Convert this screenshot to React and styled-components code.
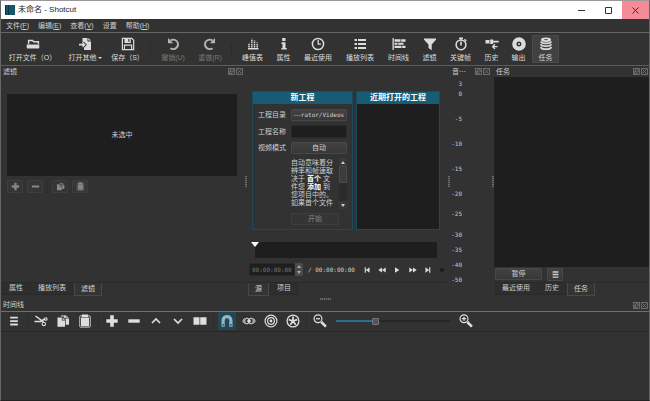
import React, { useState } from "react";
import styled, { createGlobalStyle, css } from "styled-components";

const GlobalStyle = createGlobalStyle`
  * {
    box-sizing: border-box;
  }

  body {
    margin: 0;
    background: #323232;
  }

  body, button, input {
    color: #cfcfcf;
    font-family: "Liberation Sans", "Noto Sans CJK SC", sans-serif;
    font-size: 7px;
    line-height: 8px;
  }

  button {
    margin: 0;
    padding: 0;
  }
`;

const Window = styled.div`
  display: flex;
  flex-direction: column;
  min-height: 100vh;
  border: 1px solid #666;
  border-top-color: #999;
  border-bottom-color: #222;
  background: #323232;
`;

/* title bar */

const TitleBar = styled.header`
  display: flex;
  align-items: center;
  height: 18px;
  padding-left: 4px;
  gap: 3px;
  background: #fff;
`;

const WindowTitle = styled.h1`
  flex: 1;
  margin: 0;
  color: #222;
  font-size: 8px;
  font-weight: normal;
  line-height: 10px;
`;

const WindowButtons = styled.div`
  display: flex;
  height: 100%;
`;

const WindowButton = styled.button`
  display: flex;
  align-items: center;
  justify-content: center;
  width: 27px;
  border: 0;
  background: ${(props) => (props.$close ? "#f48c98" : "#fff")};
  color: #333;
`;

/* menu and main toolbar */

const MenuBar = styled.nav`
  display: flex;
  align-items: center;
  height: 14px;
  padding: 0 5px;
  gap: 9px;
  border-bottom: 1px solid #666;
`;

const MenuItem = styled.button`
  border: 0;
  background: none;
`;

const Toolbar = styled.div`
  display: flex;
  align-items: center;
  height: 33px;
  padding: 0 2px;
  border-bottom: 1px solid #5c5c5c;
`;

const ToolButton = styled.button`
  display: flex;
  flex-direction: column;
  align-items: center;
  justify-content: space-between;
  flex: none;
  width: ${(props) => props.$width}px;
  height: 28px;
  padding: 1px 0 0;
  border: 1px solid ${(props) => (props.$active ? "#4a4a4a" : "transparent")};
  border-radius: 1px;
  background: ${(props) => (props.$active ? "#414141" : "none")};
  color: #dcdcdc;
  white-space: nowrap;

  &:disabled {
    color: #777;
  }

  &:disabled svg {
    color: #b4b4b4;
  }
`;

const Separator = styled.span`
  flex: none;
  width: 1px;
  height: 12px;
  margin: 0 ${(props) => props.$space || 0}px;
  background: #2b2b2b;
`;

/* docks */

const DockArea = styled.main`
  display: grid;
  flex: 231 1 0;
  grid-template-columns:
    minmax(0, 243fr) 3px minmax(200px, 200fr) 3px
    41px 3px minmax(0, 155fr);
`;

const Dock = styled.section`
  display: flex;
  flex-direction: column;
  min-width: 0;
`;

const DockTitle = styled.div`
  display: flex;
  align-items: center;
  gap: 1px;
  height: 11px;
  padding: 0 1px 0 2px;
`;

const DockName = styled.h2`
  flex: 1;
  margin: 0;
  font-size: 7px;
  font-weight: normal;
  line-height: 8px;
`;

const DockButton = styled.button`
  display: flex;
  border: 0;
  background: none;
  color: #7c7c7c;
`;

const Splitter = styled.div`
  display: flex;
  align-items: center;
  justify-content: center;

  &::after {
    content: "";
    width: ${(props) => (props.$horizontal ? 11 : 2)}px;
    height: ${(props) => (props.$horizontal ? 2 : 11)}px;
    background: repeating-linear-gradient(
      ${(props) => (props.$horizontal ? "90deg" : "180deg")},
      #6c6c6c 0 1px,
      #444 1px 2px
    );
  }
`;

const Tabs = styled.div`
  display: flex;
  align-items: flex-start;
  gap: 1px;
  height: 16px;
  padding: 0 1px;
  border-top: 1px solid #292929;
`;

const Tab = styled.button`
  height: 12px;
  padding: 0 6px;
  border: 1px solid #292929;
  border-top: 0;
  background: #2e2e2e;

  ${(props) =>
    props.$active &&
    css`
      height: 13px;
      border-color: #484848;
      background: #343434;
    `}
`;

const PushButton = styled.button`
  display: flex;
  align-items: center;
  justify-content: center;
  width: ${(props) => props.$width || "100%"};
  height: ${(props) => (props.$tall ? 13 : 12)}px;
  border: 1px solid #484848;
  border-radius: 1px;
  background: linear-gradient(#424242, #383838);

  &:disabled {
    border-color: #3e3e3e;
    background: #353535;
    color: #858585;
  }
`;

/* filters */

const FilterBody = styled.div`
  display: flex;
  flex: 1;
  flex-direction: column;
  padding: 17px 7px 0 6px;
`;

const FilterList = styled.div`
  display: flex;
  align-items: center;
  justify-content: center;
  height: 82px;
  background: #1e1e1e;
`;

const FilterActions = styled.div`
  display: flex;
  align-items: center;
  gap: 4px;
  padding-top: 4px;
`;

/* player and project panels */

const PlayerBody = styled.div`
  display: flex;
  flex: 1;
  flex-direction: column;
  padding: 25px 7px 0 5px;
`;

const Projects = styled.div`
  display: grid;
  grid-template-columns: 101fr 84fr;
  gap: 3px;
  height: 139px;
`;

const Panel = styled.section`
  display: flex;
  flex-direction: column;
  min-width: 0;
  border: 1px solid #1b4b5b;
`;

const PanelTitle = styled.h3`
  margin: 0;
  background: #175c75;
  color: #fff;
  font-size: 8px;
  line-height: 12px;
  text-align: center;
`;

const RecentList = styled.div`
  flex: 1;
  background: #1e1e1e;
`;

const ProjectForm = styled.form`
  display: grid;
  grid-template-columns: 28px 1fr;
  align-items: center;
  column-gap: 5px;
  row-gap: 4px;
  padding: 5px 5px 0;
  white-space: nowrap;
`;

const NameInput = styled.input`
  width: 100%;
  height: 13px;
  padding: 0 2px;
  border: 1px solid #292929;
  border-radius: 1px;
  background: #1e1e1e;
`;

const Mono = styled.span`
  font-family: "DejaVu Sans Mono", monospace;
  font-size: 6px;
`;

const Ellipsis = styled.span`
  font-family: "Noto Sans CJK SC", sans-serif;
`;

const Hint = styled.div`
  display: flex;
  grid-column: 2;
  justify-content: space-between;
  height: 51px;
`;

const HintText = styled.p`
  width: 46px;
  margin: 0;
  padding-top: 1px;

  b {
    color: #fff;
  }
`;

const ScrollBar = styled.div`
  display: flex;
  flex-direction: column;
  width: 8px;
  background: #2b2b2b;
`;

const ScrollThumb = styled.div`
  height: 17px;
  margin-bottom: auto;
  border: 1px solid #4a4a4a;
  background: #3c3c3c;
`;

const ScrollButton = styled.button`
  display: flex;
  align-items: center;
  justify-content: center;
  height: 8px;
  border: 0;
  background: #383838;
`;

const StartRow = styled.div`
  grid-column: 2;
`;

const ScrubBar = styled.div`
  position: relative;
  height: 16px;
  margin: 12px 3px 0;
  background: #1e1e1e;
`;

const Playhead = styled.svg`
  position: absolute;
  top: 0;
  left: -4px;
`;

const Transport = styled.div`
  display: flex;
  align-items: center;
  height: 13px;
  margin: 5px -7px 0 -3px;
  white-space: nowrap;
`;

const TimeInput = styled.input`
  width: 46px;
  height: 13px;
  padding: 0 2px;
  border: 1px solid #292929;
  border-radius: 2px 0 0 2px;
  background: #1e1e1e;
  color: #777;
  font-family: "DejaVu Sans Mono", monospace;
  font-size: 6px;
`;

const SpinButton = styled.button`
  display: flex;
  margin-right: 5px;
  border: 0;
  border-radius: 0 2px 2px 0;
  background: #4a4a4a;
`;

const TransportButtons = styled.div`
  display: flex;
  flex: 1;
  align-items: center;
  justify-content: space-between;
  max-width: 82px;
  margin-left: 8px;
`;

const IconButton = styled.button`
  display: flex;
  border: 0;
  background: none;
  color: ${(props) => (props.$dark ? "#111" : "#dcdcdc")};
`;

/* peak meter */

const MeterScale = styled.ol`
  display: flex;
  flex: 1;
  flex-direction: column;
  margin: 0;
  padding: 3px 29px 14px 0;
  list-style: none;
`;

const MeterMark = styled.li`
  flex: ${(props) => props.$span} 0 0;
  color: #c4ccd4;
  font-family: "DejaVu Sans Mono", monospace;
  font-size: 6px;
  text-align: right;
`;

/* jobs */

const JobList = styled.div`
  flex: 1;
  background: #1e1e1e;
`;

const JobActions = styled.div`
  display: flex;
  align-items: center;
  gap: 5px;
  height: 15px;
  padding: 0 1px;
`;

/* timeline */

const TimelineDock = styled.section`
  flex: 100 1 0;
`;

const TimelineTools = styled.div`
  display: flex;
  align-items: center;
  gap: 4px;
  height: 21px;
  padding: 0 4px;
  border-top: 1px solid #707070;
  border-bottom: 1px solid #272727;
`;

const TimelineButton = styled.button`
  display: flex;
  align-items: center;
  justify-content: center;
  flex: none;
  width: 18px;
  height: 18px;
  border: 0;
  border-radius: 1px;
  background: ${(props) => (props.$active ? "#224858" : "none")};
  color: ${(props) => (props.$active ? "#93b4c2" : "#dedede")};
`;

const ZoomSlider = styled.input`
  flex: none;
  width: 114px;
  height: 8px;
  margin: 0 3px;
  appearance: none;
  background: linear-gradient(90deg, #286f8b 34%, #272727 34%) center / 100% 2px
    no-repeat;

  &::-webkit-slider-thumb {
    width: 7px;
    height: 7px;
    border: 1px solid #777;
    border-radius: 1px;
    appearance: none;
    background: #555;
  }
`;

const stroke = { fill: "none", stroke: "currentColor" };

const shapes = {
  folder: (
    <>
      <path {...stroke} strokeWidth="1.4" d="M2.6 7V3.5h4l1 1.2h4.8V7" />
      <path d="M.7 7.4h12.6v3.1q0 1-1 1H1.7q-1 0-1-1z" />
    </>
  ),
  openOther: (
    <>
      <path d="M4.5 1h5v3.5H13V13H6v-2.2l3-3.1-3-2.9-1.5 1z" />
      <path d="M10.4.9 13 3.6h-2.6zM1 6.8h3.5V4.7l3.3 3-3.3 3.1V8.6H1z" />
    </>
  ),
  save: (
    <path
      fillRule="evenodd"
      d="M.8.8H11l2.3 2.3v10.2H.8zM2 2v10h.9V7.5h8.3V12h.9V3.5L10.6 2h-.8v3.9H3.5V2zm5.3 0v2.8h1.2V2zM4 8.7V12h6V8.7z"
    />
  ),
  undo: (
    <>
      <path
        {...stroke}
        strokeWidth="1.9"
        d="M4.5 3.3C8 1.6 12 3.6 12 7.3c0 4-4.5 6-7.6 4"
      />
      <path d="M2 1v5.2h5.2z" />
    </>
  ),
  redo: (
    <>
      <path
        {...stroke}
        strokeWidth="1.9"
        d="M9.5 3.3C6 1.6 2 3.6 2 7.3c0 4 4.5 6 7.6 4"
      />
      <path d="M12 1v5.2H6.8z" />
    </>
  ),
  peak: (
    <>
      <path
        {...stroke}
        strokeWidth="1.5"
        strokeDasharray="1.5 .6"
        d="M3 10.5V6M5.8 10.5V1.8M8.5 10.5V3.5M11.2 10.5V5.5"
      />
      <path d="M2 11h10.5v1.5H2z" />
    </>
  ),
  info: <path d="M5.2 1h3.3v3H5.2zM4.5 5.3h4v5.6h1.2v1.7H4.4v-1.7h1.1V7h-1z" />,
  clock: (
    <>
      <circle {...stroke} cx="7" cy="7" r="5.6" strokeWidth="1.5" />
      <path {...stroke} strokeWidth="1.3" d="M7.2 3v4.2H10" />
    </>
  ),
  list: (
    <path d="M1.5 2H4v2H1.5zM5 2h8v2H5zM1.5 6H4v2H1.5zM5 6h8v2H5zM1.5 10H4v2H1.5zM5 10h8v2H5z" />
  ),
  timeline: (
    <path d="M.5 1h1.3v12H.5zM2.5 2.2h6v2.5h-6zM9.2 2.2h4.3v2.5H9.2zM2.5 5.7h3v2h-3zM6.2 5.7h5.3v2H6.2zM2.5 8.7h7V11h-7zM10.2 8.7h3.3V11h-3.3z" />
  ),
  filter: <path d="M1 1.5h12v1.3L8.7 7.5v5.8l-3.2-2.2V7.5L1 2.8z" />,
  stopwatch: (
    <>
      <circle {...stroke} cx="7" cy="7.8" r="4.9" strokeWidth="1.5" />
      <path d="M5 .5h4v1.4H7.7v1.4H6.3V1.9H5zM6.2 4.4h1.6v4H6.2zM11 1.8l1.8 1.8-1 .8L10 2.7z" />
    </>
  ),
  history: (
    <>
      <path d="M.5 3h4v3.5h-4zM5.2 2.5h3v4.5h-3zM8.2 3.7h5.5v1.8H8.2z" />
      <path {...stroke} strokeWidth="1.3" d="M12.5 9.7H8M10 7.3 7.6 9.7 10 12" />
    </>
  ),
  disc: (
    <path
      fillRule="evenodd"
      d="M7 .2a6.8 6.8 0 1 1 0 13.6A6.8 6.8 0 0 1 7 .2M7 4.5a2.5 2.5 0 1 0 0 5 2.5 2.5 0 0 0 0-5M7 6a1 1 0 1 1 0 2 1 1 0 0 1 0-2"
    />
  ),
  jobs: (
    <>
      <ellipse cx="7" cy="2.8" rx="5" ry="2.2" />
      <ellipse cx="7" cy="2.6" rx="2" ry=".6" fill="#555" />
      <path
        {...stroke}
        strokeWidth="1.8"
        d="M1.7 4.5C2.5 7 11.5 7 12.3 4.5M1.7 7.2c.8 2.5 9.8 2.5 10.6 0M1.7 9.9c.8 3 9.8 3 10.6 0"
      />
    </>
  ),
  menu: <path d="M2.5 2h9v2.2h-9zM2.5 6h9v2.2h-9zM2.5 10h9v2.2h-9z" />,
  cut: (
    <>
      <path {...stroke} strokeWidth="1.5" d="M1.5 2 9.5 7.8M.5 7.4h6.3L11 4.6" />
      <circle {...stroke} cx="11.8" cy="5" r="1.3" strokeWidth="1.1" />
      <circle {...stroke} cx="9.8" cy="10" r="1.7" strokeWidth="1.1" />
    </>
  ),
  copy: (
    <>
      <path d="M1.5 3.5h4.3v3H9v6.2H1.5zM6.5 3.4 9 5.8H6.5z" />
      <path d="M5 1.5h4v1H5zM9.7 4.5H13v6.3H9.7zM8.2 1.3h1.6v3H8.2zM10.3 1.4l2.4 2.3h-2.4z" />
    </>
  ),
  paste: (
    <>
      <rect
        {...stroke}
        x="1.7"
        y="1.8"
        width="10.6"
        height="11.4"
        rx="1"
        strokeWidth="1"
        opacity=".8"
      />
      <path d="M4 .5h6v2.5H4zM3 3.5h8v8.7H3z" />
    </>
  ),
  plus: <path d="M5.2 1.3h3.6v3.9h3.9v3.6H8.8v3.9H5.2V8.8H1.3V5.2h3.9z" />,
  minus: <path d="M1.3 5.3h11.4v3.4H1.3z" />,
  up: <path {...stroke} strokeWidth="1.7" d="m3 9 4-4 4 4" />,
  down: <path {...stroke} strokeWidth="1.7" d="m3 5 4 4 4-4" />,
  split: <path d="M.5 3.3h6v7.4h-6zM7.2 3.3h6.3v7.4H7.2z" />,
  magnet: (
    <>
      <path
        {...stroke}
        strokeWidth="3.2"
        d="M3.1 12.8V6.5C3.1 1.2 10.9 1.2 10.9 6.5v6.3"
      />
      <path fill="#224858" d="M2.5 10h1.2v1.7H2.5zM10.3 10h1.2v1.7h-1.2z" />
    </>
  ),
  scrub: (
    <>
      <path {...stroke} d="M2.5 4.5.8 7l1.7 2.5M11.5 4.5 13.2 7l-1.7 2.5" />
      <ellipse {...stroke} cx="5" cy="7" rx="2.3" ry="2.9" />
      <ellipse {...stroke} cx="9" cy="7" rx="2.3" ry="2.9" />
      <circle cx="7" cy="7" r="1.8" />
    </>
  ),
  ripple: (
    <>
      <circle {...stroke} cx="7" cy="7" r="5.9" strokeWidth="1.2" />
      <circle {...stroke} cx="7" cy="7" r="3.4" strokeWidth="1.2" />
      <circle cx="7" cy="7" r="1.4" />
    </>
  ),
  rippleAll: (
    <>
      <circle {...stroke} cx="7" cy="7" r="5.9" strokeWidth="1.3" />
      <path
        {...stroke}
        strokeWidth="1.7"
        d="M7 7V2.5M7 7 2.8 5.6M7 7l4.2-1.4M7 7l-2.7 3.7M7 7l2.7 3.7"
      />
    </>
  ),
  zoomOut: (
    <>
      <circle {...stroke} cx="5" cy="4.7" r="3.9" strokeWidth="1.2" />
      <path {...stroke} strokeWidth="1.3" d="M3 4.7h4" />
      <path {...stroke} strokeWidth="2.6" d="m8.3 8 4.6 4.6" />
    </>
  ),
  zoomIn: (
    <>
      <circle {...stroke} cx="5" cy="4.7" r="3.9" strokeWidth="1.2" />
      <path {...stroke} strokeWidth="1.3" d="M3 4.7h4M5 2.7v4" />
      <path {...stroke} strokeWidth="2.6" d="m8.3 8 4.6 4.6" />
    </>
  ),
  start: <path d="M3 2h2v10H3zM11.5 2v10L5 7z" />,
  rewind: <path d="M7 2.5v9L.5 7zM13.5 2.5v9L7 7z" />,
  play: <path d="M3.5 2v10L11 7z" />,
  forward: <path d="M.5 2.5v9L7 7zM7 2.5v9L13.5 7z" />,
  end: <path d="M9 2h2v10H9zM2.5 2v10L9 7z" />,
  more: <path {...stroke} strokeWidth="2.4" d="m2 3 4 4-4 4M7.5 3l4 4-4 4" />,
  float: (
    <>
      <rect {...stroke} x="1" y="1" width="12" height="12" strokeWidth="1.5" />
      <path {...stroke} strokeWidth="1.5" d="M5 3.5h5.5V8H5zM3 6v5h6" />
    </>
  ),
  close: (
    <path {...stroke} strokeWidth="1.6" d="M1 1h12v12H1zM3 3l8 8M11 3l-8 8" />
  ),
};

const Icon = ({ name, size = 14 }) => (
  <svg
    width={size}
    height={size}
    viewBox="0 0 14 14"
    fill="currentColor"
    aria-hidden="true"
  >
    {shapes[name]}
  </svg>
);

const menus = [
  ["文件", "F"],
  ["编辑", "E"],
  ["查看", "V"],
  ["设置"],
  ["帮助", "H"],
];

const tools = [
  { icon: "folder", label: "打开文件（O）", width: 59 },
  { icon: "openOther", label: "打开其他", width: 46, menu: true },
  { icon: "save", label: "保存（S）", width: 39 },
  null,
  { icon: "undo", label: "撤销(U)", width: 38, disabled: true },
  { icon: "redo", label: "重做(R)", width: 36, disabled: true },
  null,
  { icon: "peak", label: "峰值表", width: 35 },
  { icon: "info", label: "属性", width: 27 },
  { icon: "clock", label: "最近使用", width: 42 },
  { icon: "list", label: "播放列表", width: 42 },
  { icon: "timeline", label: "时间线", width: 35 },
  { icon: "filter", label: "滤镜", width: 27 },
  { icon: "stopwatch", label: "关键帧", width: 35 },
  { icon: "history", label: "历史", width: 27 },
  { icon: "disc", label: "输出", width: 27 },
  { icon: "jobs", label: "任务", width: 27, active: true },
];

const marks = [
  ["3", 10],
  ["0", 25],
  ["-5", 25],
  ["-10", 25],
  ["-15", 25],
  ["-20", 20],
  ["-25", 20],
  ["-30", 15],
  ["-35", 15],
  ["-40", 15],
  ["-50", 8],
];

const timelineTools = [
  "menu",
  null,
  "cut",
  "copy",
  "paste",
  null,
  "plus",
  "minus",
  "up",
  "down",
  "split",
  null,
  "magnet",
  "scrub",
  "ripple",
  "rippleAll",
  null,
  "zoomOut",
];

const DockHeader = ({ name }) => (
  <DockTitle>
    <DockName>{name}</DockName>
    <DockButton aria-label="浮动">
      <Icon name="float" size={7} />
    </DockButton>
    <DockButton aria-label="关闭">
      <Icon name="close" size={7} />
    </DockButton>
  </DockTitle>
);

const TabBar = ({ names, initial }) => {
  const [current, setCurrent] = useState(initial);

  return (
    <Tabs>
      {names.map((name) => (
        <Tab
          key={name}
          $active={name === current}
          onClick={() => setCurrent(name)}
        >
          {name}
        </Tab>
      ))}
    </Tabs>
  );
};

const Filters = () => (
  <Dock>
    <DockHeader name="滤镜" />
    <FilterBody>
      <FilterList>未选中</FilterList>
      <FilterActions>
        <PushButton $width="16px" $tall disabled aria-label="添加">
          <Icon name="plus" size={9} />
        </PushButton>
        <PushButton $width="16px" $tall disabled aria-label="移除">
          <Icon name="minus" size={9} />
        </PushButton>
        <Separator />
        <PushButton $width="16px" $tall disabled aria-label="复制">
          <Icon name="copy" size={9} />
        </PushButton>
        <PushButton $width="16px" $tall disabled aria-label="粘贴">
          <Icon name="paste" size={9} />
        </PushButton>
      </FilterActions>
    </FilterBody>
    <TabBar names={["属性", "播放列表", "滤镜"]} initial="滤镜" />
  </Dock>
);

const NewProject = () => (
  <Panel>
    <PanelTitle>新工程</PanelTitle>
    <ProjectForm onSubmit={(e) => e.preventDefault()}>
      <label htmlFor="folder">工程目录</label>
      <PushButton id="folder" type="button">
        <Ellipsis>⋯</Ellipsis>
        <Mono>rator/Videos</Mono>
      </PushButton>
      <label htmlFor="name">工程名称</label>
      <NameInput id="name" />
      <label htmlFor="mode">视频模式</label>
      <PushButton id="mode" type="button">
        自动
      </PushButton>
      <Hint>
        <HintText>
          自动意味着分
          <br />
          辨率和帧速取
          <br />
          决于 <b>首个</b> 文
          <br />
          件您 <b>添加</b> 到
          <br />
          您项目中的。
          <br />
          如果首个文件
        </HintText>
        <ScrollBar>
          <ScrollButton type="button" aria-label="向上">
            <svg width="4" height="3" fill="#ccc">
              <path d="M2 0 4 3H0z" />
            </svg>
          </ScrollButton>
          <ScrollThumb />
          <ScrollButton type="button" aria-label="向下">
            <svg width="4" height="3" fill="#ccc">
              <path d="M0 0h4L2 3z" />
            </svg>
          </ScrollButton>
        </ScrollBar>
      </Hint>
      <StartRow>
        <PushButton $width="48px" disabled>
          开始
        </PushButton>
      </StartRow>
    </ProjectForm>
  </Panel>
);

const Player = () => (
  <Dock>
    <PlayerBody>
      <Projects>
        <NewProject />
        <Panel>
          <PanelTitle>近期打开的工程</PanelTitle>
          <RecentList />
        </Panel>
      </Projects>
      <ScrubBar>
        <Playhead width="8" height="5" fill="#fff">
          <path d="M0 0h8L4 5z" />
        </Playhead>
      </ScrubBar>
      <Transport>
        <TimeInput aria-label="位置" defaultValue="00:00:00:00" />
        <SpinButton aria-label="调整位置">
          <svg width="8" height="13" fill="#aaa">
            <path d="M4 2 6 5H2zM2 8h4l-2 3z" />
          </svg>
        </SpinButton>
        <Mono>/ 00:00:00:00</Mono>
        <TransportButtons>
          {["start", "rewind", "play", "forward", "end", "more"].map((name) => (
            <IconButton key={name} $dark={name === "more"} aria-label={name}>
              <Icon name={name} size={name === "more" ? 6 : 8} />
            </IconButton>
          ))}
        </TransportButtons>
      </Transport>
    </PlayerBody>
    <TabBar names={["源", "项目"]} initial="源" />
  </Dock>
);

const Meter = () => (
  <Dock>
    <DockHeader name="音⋯" />
    <MeterScale>
      {marks.map(([label, span]) => (
        <MeterMark key={label} $span={span}>
          {label}
        </MeterMark>
      ))}
    </MeterScale>
  </Dock>
);

const Jobs = () => (
  <Dock>
    <DockHeader name="任务" />
    <JobList />
    <JobActions>
      <PushButton $width="47px">暂停</PushButton>
      <PushButton $width="16px" $tall aria-label="菜单">
        <Icon name="menu" size={9} />
      </PushButton>
    </JobActions>
    <TabBar names={["最近使用", "历史", "任务"]} initial="任务" />
  </Dock>
);

const Timeline = () => {
  const [snap, setSnap] = useState(true);

  return (
    <TimelineDock>
      <DockHeader name="时间线" />
      <TimelineTools>
        {timelineTools.map((name, i) =>
          name ? (
            <TimelineButton
              key={name}
              aria-label={name}
              $active={name === "magnet" && snap}
              onClick={name === "magnet" ? () => setSnap(!snap) : undefined}
            >
              <Icon name={name} size={name === "menu" ? 12 : 14} />
            </TimelineButton>
          ) : (
            <Separator key={i} />
          )
        )}
        <ZoomSlider type="range" aria-label="缩放" defaultValue="34" />
        <TimelineButton aria-label="zoomIn">
          <Icon name="zoomIn" />
        </TimelineButton>
      </TimelineTools>
    </TimelineDock>
  );
};

export default function App() {
  return (
    <Window>
      <GlobalStyle />
      <TitleBar>
        <svg width="10" height="10" aria-hidden="true">
          <path fill="#16566d" d="M0 0h10v10H0z" />
          <path fill="#0c3543" d="M0 0h1v10H0zM3 0h1v10H3z" />
        </svg>
        <WindowTitle>未命名 - Shotcut</WindowTitle>
        <WindowButtons>
          <WindowButton aria-label="最小化">
            <svg width="7" height="7" stroke="currentColor">
              <path d="M0 3.5h7" />
            </svg>
          </WindowButton>
          <WindowButton aria-label="最大化">
            <svg width="7" height="7" stroke="currentColor" fill="none">
              <path d="M.5.5h6v6h-6z" />
            </svg>
          </WindowButton>
          <WindowButton $close aria-label="关闭">
            <svg width="7" height="7" stroke="currentColor">
              <path d="m.5.5 6 6M6.5.5l-6 6" />
            </svg>
          </WindowButton>
        </WindowButtons>
      </TitleBar>
      <MenuBar>
        {menus.map(([name, key]) => (
          <MenuItem key={name}>
            {name}
            {key && (
              <>
                (<u>{key}</u>)
              </>
            )}
          </MenuItem>
        ))}
      </MenuBar>
      <Toolbar>
        {tools.map((tool, i) =>
          tool ? (
            <ToolButton
              key={tool.icon}
              $width={tool.width}
              $active={tool.active}
              disabled={tool.disabled}
            >
              <Icon name={tool.icon} />
              <span>
                {tool.label}
                {tool.menu && (
                  <svg width="5" height="3" fill="currentColor">
                    <path d="M1 0h4L3 2z" />
                  </svg>
                )}
              </span>
            </ToolButton>
          ) : (
            <Separator key={i} $space={3} />
          )
        )}
      </Toolbar>
      <DockArea>
        <Filters />
        <Splitter />
        <Player />
        <Splitter />
        <Meter />
        <Splitter />
        <Jobs />
      </DockArea>
      <Splitter $horizontal />
      <Timeline />
    </Window>
  );
}
